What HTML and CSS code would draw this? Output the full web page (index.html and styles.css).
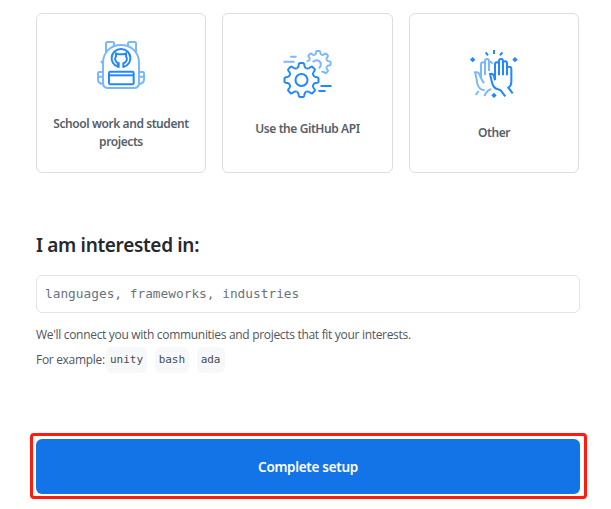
FILE: index.html
```html
<!DOCTYPE html>
<html lang="en">
<head>
<meta charset="utf-8">
<title>Complete setup</title>
<link rel="stylesheet" href="styles.css">
</head>
<body>
<main class="page">
  <section class="cards">
    <div class="card school">
      <svg class="icon" width="50" height="50" viewBox="33 30 150 150">
        <g class="light">
          <path d="M63 68V40q0-4 4-4h16q4 0 4 4v8M153 68V40q0-4-4-4h-16q-4 0-4 4v8"/>
          <path d="M54 98C54 68 76 45 108 45S162 68 162 98V158Q162 174 146 174H70Q54 174 54 158Z"/>
          <path d="M54 126H43q-4 0-4 4v18q0 13 15 14M39 140h15M162 126h11q4 0 4 4v18q0 13-15 14M162 140h15M50 92v8"/>
        </g>
        <g class="dark">
          <rect x="72" y="125" width="74" height="38" rx="4"/><path d="M72 136H146"/>
          <path d="M101 111C69 103 75 57 108 57S147 103 115 111"/>
          <path d="M101 113V100C90 97 88 85 93 79V70L101 73H115L123 70V79C128 85 126 97 115 100V113M101 104h-6"/>
        </g>
      </svg>
      <span>School work and student projects</span>
    </div>
    <div class="card api">
      <svg class="icon" width="50" height="50" viewBox="31.5 27 150 150">
        <defs><path id="tooth" d="M-14.5-35Q-10-37-9-42L-8-48Q-7-51-5-51H5Q7-51 8-48L9-42Q10-37 14.5-35"/></defs>
        <g class="light">
          <g transform="translate(137 70) scale(.73)" stroke-width="8">
            <use href="#tooth" transform="rotate(-45)"/><use href="#tooth"/><use href="#tooth" transform="rotate(45)"/><use href="#tooth" transform="rotate(90)"/><use href="#tooth" transform="rotate(135)"/>
            <path d="M-35-14.5Q-38-10-47-8"/>
          </g>
          <path d="M121 67C128 56 145 60 145 74Q145 81 139 85M53 50H72M33 65H66"/>
        </g>
        <g class="dark">
          <g transform="translate(87 120)">
            <use href="#tooth"/><use href="#tooth" transform="rotate(45)"/><use href="#tooth" transform="rotate(90)"/><use href="#tooth" transform="rotate(135)"/><use href="#tooth" transform="rotate(180)"/><use href="#tooth" transform="rotate(225)"/><use href="#tooth" transform="rotate(270)"/><use href="#tooth" transform="rotate(315)"/>
            <circle r="18"/>
          </g>
          <path d="M144 138H177M138 153H159"/>
        </g>
      </svg>
      <span>Use the GitHub API</span>
    </div>
    <div class="card other">
      <svg class="icon" width="50" height="50" viewBox="27 27 150 150">
        <g class="light">
          <path d="M63 107V73q0-6 6-6 6 0 6 6v32M75 73V63q0-6 6-6 6 0 6 6v30M87 66q8-2 10 5M63 92V115L72 130M63 115L57 100Q53 95 45 97L50 118Q51 142 64 148L74 151M56 153L47 165M94 148Q82 149 73 168"/>
        </g>
        <g class="dark">
          <path d="M105 121V73q0-6 6-6 6 0 6 6v33M117 73V63q0-6 6-6 6 0 6 6v43M129 70q0-6 6-6 6 0 6 6v36M141 85q0-5 6-5 7 0 7 7V125Q154 137 145 143L158 160M105 121L101 106Q98 100 90 102L95 123Q99 145 114 148L122 151L136 169"/>
          <path d="M102 30V42M77 37L84 46M127 37L120 46"/>
          <path class="spark" d="M38 51l4 4 4 4-4 4-4 4-4-4-4-4 4-4zM165 51l4 4 4 4-4 4-4 4-4-4-4-4 4-4zM102 158l4 4 4 4-4 4-4 4-4-4-4-4 4-4z"/>
        </g>
      </svg>
      <span>Other</span>
    </div>
  </section>
  <h1 class="heading">I am interested in:</h1>
  <input class="interests" type="text" placeholder="languages, frameworks, industries">
  <p class="hint">We'll connect you with communities and projects that fit your interests.</p>
  <div class="examples"><span class="label">For example:</span><code>unity</code><code>bash</code><code>ada</code></div>
  <div class="highlight"><button class="submit">Complete setup</button></div>
</main>
</body>
</html>
```
FILE: styles.css
```css
* { box-sizing: border-box; }
body { margin: 0; background: #fff; color: #586069; font-family: "Open Sans", sans-serif; overflow: hidden; }
.page { width: 611px; height: 509px; padding: 13px 24px 0 36px; }
.cards { display: grid; grid-template-columns: 170px 171px 170px; column-gap: 16px; }
.card {
  height: 160px; border: 1px solid #dcdddf; border-radius: 6px;
  display: flex; flex-direction: column; align-items: center;
  font-family: "Noto Sans", sans-serif; font-size: 12px; line-height: 18px; font-weight: 600; text-align: center;
  letter-spacing: -0.42px;
}
.card span { width: 150px; }
.school { padding-top: 26px; }
.school span { margin-top: 25px; }
.api { padding-top: 35px; }
.api span { margin-top: 21px; }
.other { padding-top: 35px; }
.other span { margin-top: 25px; }
.icon { display: block; fill: none; stroke-width: 6; flex: none; }
.light { stroke: #79b8ff; }
.dark { stroke: #2188ff; }
.spark { fill: #2188ff; stroke: none; }
.heading { margin: 57px 0 0; font-family: "Noto Sans", sans-serif; font-size: 19px; line-height: 30px; font-weight: 600; color: #24292e; letter-spacing: -0.33px; }
.interests {
  display: block; width: 544px; height: 38px; margin: 15px 0 0; padding: 0 8px 2px;
  border: 1px solid #e1e4e8; border-radius: 6px; background: #fff; outline: 0;
  font-family: "DejaVu Sans Mono", monospace; font-size: 12.8px;
}
.interests::placeholder { color: #6a737d; opacity: 1; }
.hint { margin: 13px 0 0; font-size: 12px; line-height: 18px; letter-spacing: -0.31px; white-space: nowrap; color: #4f565e; }
.examples { display: flex; align-items: center; height: 26px; margin-top: 3px; font-size: 12px; color: #4f565e; }
.label { width: 70px; padding-bottom: 1px; white-space: nowrap; letter-spacing: -0.31px; }
code {
  height: 26px; padding: 0 4px; border-radius: 6px; background: #f6f8fa; color: #444d56;
  font-family: "DejaVu Sans Mono", monospace; font-size: 11px; line-height: 26px;
}
code + code { margin-left: 7.5px; }
.highlight { width: 557px; height: 66px; margin: 60px 0 0 -6px; padding: 3px; border: 3px solid #ff1c0e; border-radius: 4px; }
.submit {
  display: block; width: 544px; height: 55px; padding: 0; border: 0; border-radius: 6px;
  background: #1374e7; color: #fff; font-family: "Noto Sans", sans-serif; font-size: 13.5px; font-weight: 600; letter-spacing: -0.3px;
}
```
